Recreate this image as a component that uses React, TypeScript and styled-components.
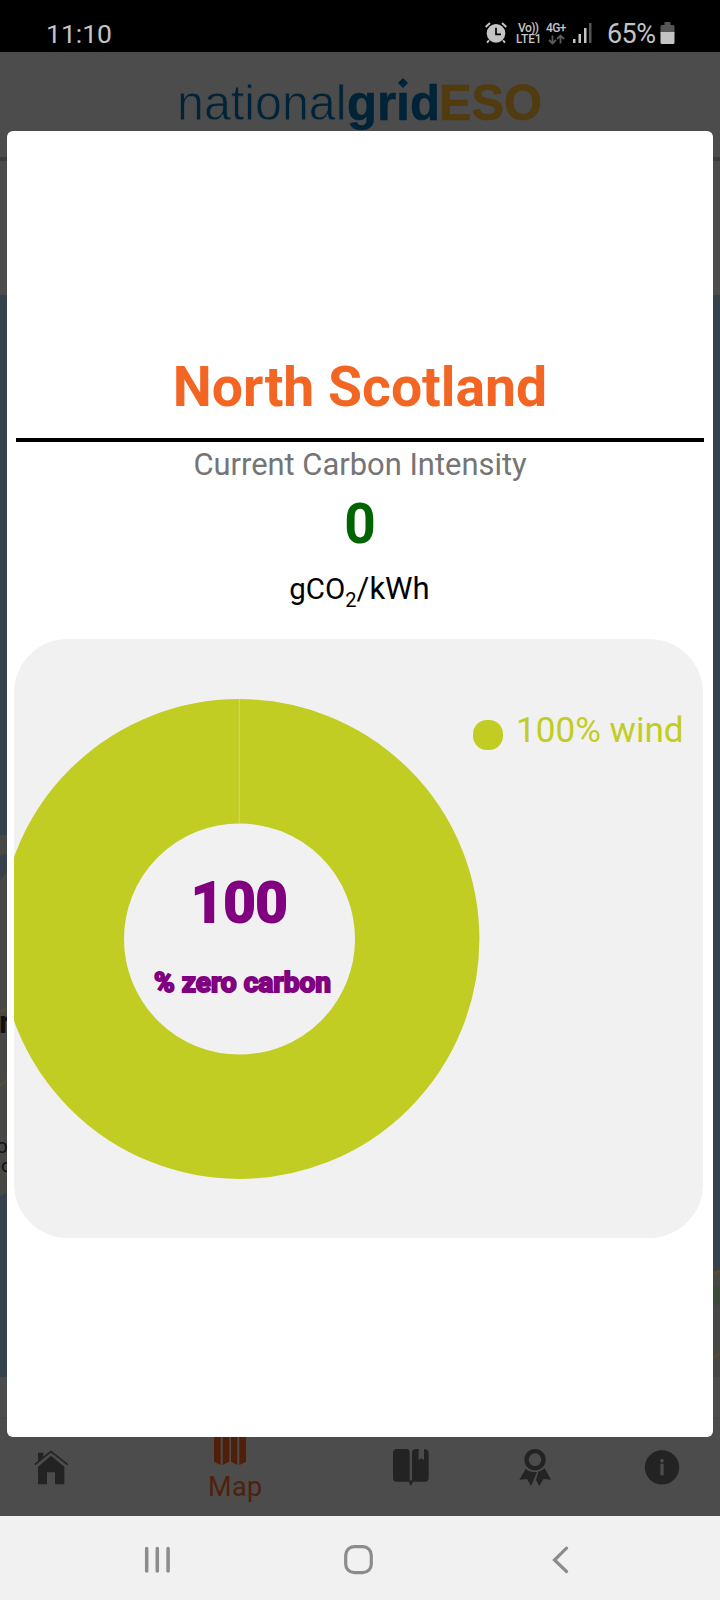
import React from "react";
import styled, { createGlobalStyle } from "styled-components";

const GlobalStyle = createGlobalStyle`
  * { box-sizing: border-box; }
  body { margin: 0; font-family: Roboto, "Liberation Sans", sans-serif; }
`;

const colors = {
  dim: "#4c4c4c",
  glyph: "#232323",
  navy: "#002338",
  gold: "#513b0f",
  lime: "#c1cd23",
  panel: "#f1f1f1",
  orange: "#f36523",
  purple: "#800080",
};

const Screen = styled.div`
  position: relative;
  display: flex;
  flex-direction: column;
  width: 720px;
  height: 1600px;
  overflow: hidden;
  background: ${colors.dim};
`;

const StatusBar = styled.header`
  display: flex;
  align-items: flex-start;
  justify-content: space-between;
  height: 52px;
  padding: 18px 45px 0 46px;
  background: #000;
  color: #c4c4c4;
`;

const Clock = styled.span`
  font-size: 26.5px;
  line-height: 32px;
`;

const StatusIcons = styled.div`
  display: flex;
  align-items: flex-start;
`;

const IconSlot = styled.span<{ $top: number; $right?: number }>`
  display: flex;
  margin: ${(p) => p.$top}px ${(p) => p.$right ?? 0}px 0 0;
`;

const Percent = styled.span`
  width: 53px;
  font-size: 27px;
  line-height: 32px;
  letter-spacing: -0.6px;
  white-space: nowrap;
`;

const LogoBar = styled.div`
  display: flex;
  justify-content: center;
  height: 109px;
  padding-top: 8px;
  border-bottom: 4px solid #3a3c40;
`;

const MapArea = styled.main`
  height: 1257px;
`;

const TabBar = styled.nav`
  display: flex;
  height: 98px;
  border-top: 1px solid #464646;
`;

const Tab = styled.div<{ $width: number; $pad: number; $top?: number }>`
  display: flex;
  flex-direction: column;
  width: ${(p) => p.$width}px;
  padding: ${(p) => p.$top ?? 30}px 0 0 ${(p) => p.$pad}px;
  color: ${colors.glyph};
`;

const TabLabel = styled.span`
  margin: 5px 0 0 -6px;
  font-size: 27px;
  line-height: 32px;
  letter-spacing: 0.4px;
  color: #4f210c;
`;

const SystemBar = styled.footer`
  display: flex;
  align-items: center;
  justify-content: space-between;
  height: 84px;
  padding: 3px 151px 0 144px;
  background: ${colors.panel};
`;

const HomeButton = styled.span`
  display: flex;
  margin-right: 5px;
`;

const Modal = styled.section`
  position: absolute;
  top: 131px;
  left: 7px;
  display: flex;
  flex-direction: column;
  align-items: center;
  width: 706px;
  height: 1306px;
  padding-top: 225px;
  border-radius: 6px;
  background: #fff;
`;

const Title = styled.h1`
  margin: 0;
  font-size: 55.3px;
  font-weight: 700;
  line-height: 64px;
  color: ${colors.orange};
`;

const Rule = styled.hr`
  width: 688px;
  height: 4px;
  margin: 18px 0 0;
  border: 0;
  background: #000;
`;

const Caption = styled.p`
  margin: 5px 0 0;
  font-size: 30.9px;
  line-height: 36px;
  color: #757575;
`;

const Intensity = styled.strong`
  margin-top: 9px;
  font-size: 55px;
  line-height: 64px;
  color: #006400;
`;

const Unit = styled.div`
  display: flex;
  align-items: baseline;
  height: 40px;
  margin: 13px 1px 0 0;
  font-size: 31px;
  line-height: 40px;
  color: #000;
`;

const Gas = styled.span`
  font-size: 29.5px;
`;

const Sub = styled.sub`
  font-size: 20px;
  line-height: 1;
  vertical-align: -8px;
`;

const ChartPanel = styled.div`
  display: flex;
  width: 689px;
  height: 599px;
  margin: 30px 0 0 -3px;
  border-radius: 54px;
  background: ${colors.panel};
  overflow: hidden;
`;

const Legend = styled.div`
  display: flex;
  align-items: flex-start;
  gap: 13px;
  height: 40px;
  margin: 71px 0 0 -11px;
  font-size: 35.1px;
  line-height: 40px;
  color: ${colors.lime};
  white-space: nowrap;
`;

const Dot = styled.i`
  width: 30px;
  height: 30px;
  margin-top: 10px;
  border-radius: 14px;
  background: ${colors.lime};
`;

const AlarmIcon = () => (
  <svg width="22" height="22" viewBox="77 65 66 66">
    <path d="M79 80L92 68M128 68L141 80M89 120L83 127M131 120L137 127" stroke="#c4c4c4" strokeWidth="6" fill="none" />
    <circle cx="110" cy="99" r="28" fill="#c4c4c4" />
    <path d="M110 82V102H125" stroke="#000" strokeWidth="5" fill="none" />
  </svg>
);

const NetworkIcons = () => (
  <svg width="84" height="30" viewBox="0 0 84 30" fill="#c4c4c4" fontFamily="Roboto, sans-serif" fontWeight="500">
    <text x="6" y="13.5" fontSize="12" textLength="21">Vo))</text>
    <text x="4" y="25" fontSize="12.5" textLength="25.5" lengthAdjust="spacingAndGlyphs">LTE1</text>
    <text x="34" y="13.7" fontSize="12" textLength="20.5">4G+</text>
    <path d="M40.5 17.5V25M37 22L40.5 25.5L44 22M48.5 25.5V18M45 21L48.5 17.5L52 21" stroke="#5a5a5a" strokeWidth="1.8" fill="none" />
    <rect x="61" y="21" width="2.5" height="4" />
    <rect x="66.5" y="16" width="2.5" height="9" />
    <rect x="72" y="10" width="2.5" height="15" />
    <rect x="77" y="5" width="2.5" height="20" fill="#555" />
  </svg>
);

const BatteryIcon = () => (
  <svg width="15" height="22" viewBox="0 0 15 22">
    <path d="M4.5 0h6v3H13a1.500 1.500 0 0 1 1.500 1.500V11H.5V4.500A1.500 1.500 0 0 1 2 3h2.500z" fill="#555" />
    <path d="M.5 10h14v10.500a1.500 1.500 0 0 1-1.500 1.500H2a1.500 1.500 0 0 1-1.500-1.500z" fill="#c4c4c4" />
  </svg>
);

const Logo = () => (
  <svg width="400" height="80" viewBox="0 0 400 80" fontFamily='"Liberation Sans", Arial, sans-serif' fontSize="50">
    <text x="17" y="60" textLength="169.500" lengthAdjust="spacingAndGlyphs" fill={colors.navy} stroke={colors.dim} strokeWidth="0.8">
      national
    </text>
    <text x="187" y="60" textLength="93" lengthAdjust="spacingAndGlyphs" fontWeight="700" fill={colors.navy} stroke={colors.navy} strokeWidth="0.6">
      grid
    </text>
    <rect x="237" y="20" width="13" height="11.500" fill={colors.dim} />
    <path d="M243 18L248 23L243 28L238 23Z" fill={colors.navy} />
    <text x="279" y="60" textLength="103" lengthAdjust="spacingAndGlyphs" fontWeight="700" fill={colors.gold} stroke={colors.gold} strokeWidth="0.6">
      ESO
    </text>
  </svg>
);

const MapBackdrop = () => (
  <svg width="720" height="1257" viewBox="0 161 720 1257">
    <rect y="295" width="720" height="1082" fill="#35414b" />
    <path d="M0 835H12V853L0 855ZM0 880L12 866V1190L0 1196Z" fill="#484847" />
    <path d="M0 1012Q6 1008 12 1007M0 1085Q8 1082 12 1070" stroke="#58502f" strokeWidth="2" fill="none" />
    <path d="M708 1274Q714 1269 720 1271V1377H708Z" fill="#484746" />
    <path d="M708 1276L720 1271M708 1361L720 1354" stroke="#574b2d" strokeWidth="3" />
    <path d="M708 1286H720V1303L708 1308Z" fill="#3f493b" />
    <g fontFamily="Roboto, sans-serif" fill="#111">
      <text x="-1" y="1033" fontSize="32" fontWeight="700">r</text>
      <text x="-4" y="1153" fontSize="21">o</text>
      <text x="1" y="1172" fontSize="19">c</text>
    </g>
  </svg>
);

const HomeIcon = () => (
  <svg width="36" height="38" viewBox="99 117 108 114" fill="currentColor">
    <path d="M114 128H130V140L114 154ZM153 137L193 170V223H165V187H141V223H114V170Z" />
    <path d="M104 164L153 125L203 164" stroke="currentColor" strokeWidth="5" fill="none" />
  </svg>
);

const MapIcon = () => (
  <svg width="32" height="38" viewBox="642 54 96 114" fill="#501f09">
    <path d="M642 66L662 76V165L642 155ZM668 76L688 66V155L668 165ZM693 66L712 76V165L693 155ZM718 76L738 66V155L718 165Z" />
  </svg>
);

const BookIcon = () => (
  <svg width="36" height="38" viewBox="99 117 108 114" fill="currentColor">
    <path d="M110 117H139Q149 117 149 127V208Q149 212 153 212Q156 210 156 206V128Q156 117 167 117H176V151L184 144L192 151V117Q206 118 206 130V204Q206 215 195 215H160L152 228L146 215H110Q99 215 99 204V128Q99 117 110 117Z" />
  </svg>
);

const AwardIcon = () => (
  <svg width="32" height="38" viewBox="476 117 96 114" fill="currentColor">
    <circle cx="524" cy="149" r="25.500" fill="none" stroke="currentColor" strokeWidth="13" />
    <path d="M496 176Q508 188 530 186L512 228L500 207L477 209ZM534 185Q545 183 553 175L572 209L549 207L537 228L527 210Z" />
  </svg>
);

const InfoIcon = () => (
  <svg width="36" height="38" viewBox="852 117 108 114">
    <circle cx="906" cy="172" r="51.500" fill="currentColor" />
    <circle cx="906" cy="152" r="5.500" fill={colors.dim} />
    <path d="M901 161H911V196H901Z" fill={colors.dim} />
  </svg>
);

const RecentsIcon = () => (
  <svg width="27" height="28" viewBox="0 0 27 28" stroke="#8c8c8c" strokeWidth="3.500" strokeLinecap="round">
    <path d="M2.700 2.500V25M13.300 2.500V25M24.100 2.500V25" />
  </svg>
);

const HomeButtonIcon = () => (
  <svg width="30" height="30" viewBox="0 0 30 30">
    <rect x="1.700" y="1.700" width="25.600" height="26" rx="8.500" fill="none" stroke="#8c8c8c" strokeWidth="3.200" />
  </svg>
);

const BackIcon = () => (
  <svg width="17" height="28" viewBox="0 0 17 28">
    <path d="M14.500 2.200L2.500 14L14.500 25.500" fill="none" stroke="#8c8c8c" strokeWidth="3.200" strokeLinecap="round" />
  </svg>
);

const DonutChart = styled.svg`
  flex: none;
`;

const Donut = () => (
  <DonutChart width="470" height="600" viewBox="14 639 470 600">
    <circle cx="239.500" cy="939" r="177.700" fill="none" stroke={colors.lime} strokeWidth="124.400" />
    <path d="M239.300 699V823.500" stroke="#d3da69" strokeWidth="1" />
    <g fill={colors.purple} stroke={colors.purple} fontWeight="700" textAnchor="middle">
      <text x="239.500" y="921.500" fontSize="56" strokeWidth="2">100</text>
      <text x="242.500" y="991.500" fontSize="28" strokeWidth="2" textLength="177">% zero carbon</text>
    </g>
  </DonutChart>
);

export default function App() {
  return (
    <>
      <GlobalStyle />
      <Screen>
        <StatusBar>
          <Clock>11:10</Clock>
          <StatusIcons>
            <IconSlot $top={4} $right={5}><AlarmIcon /></IconSlot>
            <IconSlot $top={0} $right={11}><NetworkIcons /></IconSlot>
            <Percent>65%</Percent>
            <IconSlot $top={4}><BatteryIcon /></IconSlot>
          </StatusIcons>
        </StatusBar>
        <LogoBar>
          <Logo />
        </LogoBar>
        <MapArea>
          <MapBackdrop />
        </MapArea>
        <TabBar>
          <Tab $width={180} $pad={33}><HomeIcon /></Tab>
          <Tab $width={180} $pad={34} $top={9}>
            <MapIcon />
            <TabLabel>Map</TabLabel>
          </Tab>
          <Tab $width={126} $pad={33}><BookIcon /></Tab>
          <Tab $width={126} $pad={33}><AwardIcon /></Tab>
          <Tab $width={108} $pad={32}><InfoIcon /></Tab>
        </TabBar>
        <SystemBar>
          <RecentsIcon />
          <HomeButton><HomeButtonIcon /></HomeButton>
          <BackIcon />
        </SystemBar>
        <Modal>
          <Title>North Scotland</Title>
          <Rule />
          <Caption>Current Carbon Intensity</Caption>
          <Intensity>0</Intensity>
          <Unit>
            <Gas>gCO<Sub>2</Sub></Gas>/kWh
          </Unit>
          <ChartPanel>
            <Donut />
            <Legend>
              <Dot />
              100% wind
            </Legend>
          </ChartPanel>
        </Modal>
      </Screen>
    </>
  );
}
